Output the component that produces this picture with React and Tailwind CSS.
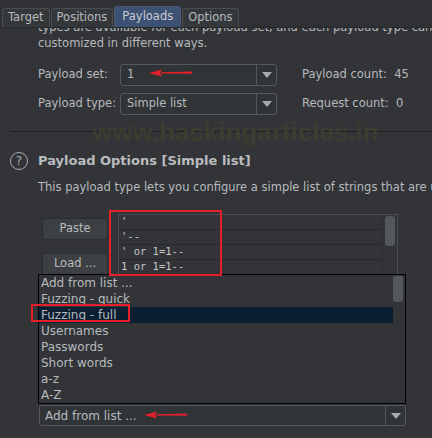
const tabs = ['Target', 'Positions', 'Payloads', 'Options']
const items = ["'", "'--", "' or 1=1--", '1 or 1=1--']
const lists = ['Add from list ...', 'Fuzzing - quick', 'Fuzzing - full', 'Usernames', 'Passwords', 'Short words', 'a-z', 'A-Z']

function Arrow() {
  return (
    <div className="h-[5px] w-0 border-x-[5px] border-t-[6px] border-x-transparent border-t-[#a9acaf]" />
  )
}

function Combo({ value, className }) {
  return (
    <div className={'flex h-[22px] items-stretch rounded-[3px] border border-[#55585c] bg-[#313437] ' + className}>
      <div className="flex flex-1 items-center px-[6px]">{value}</div>
      <div className="flex w-[20px] items-center justify-center border-l border-[#55585c]">
        <Arrow />
      </div>
    </div>
  )
}

function RedArrow({ className }) {
  return (
    <svg className={'absolute ' + className} width="44" height="8" viewBox="0 0 44 8">
      <path d="M12 3.2 L43 2.6 L43 4.8 L12 4.4 Z" fill="#e5202b" />
      <path d="M0 4 L13 0.5 L11 4 L13 7.5 Z" fill="#e5202b" />
    </svg>
  )
}

export default function App() {
  return (
    <div className="relative h-[438px] w-[432px] overflow-hidden bg-[#323437] text-[11.5px] text-[#b7babd]" style={{ fontFamily: '"DejaVu Sans", sans-serif' }}>
      {/* tabs */}
      <div className="relative z-10 flex h-[28px] items-end gap-[1px] border-b border-[#27292b] bg-[#2f3134] pl-[2px]">
        {tabs.map(t => (
          <div
            key={t}
            className={
              t === 'Payloads'
                ? 'flex h-[21px] items-start rounded-t-[3px] border border-b-0 border-[#4b5a72] bg-[#3d5174] px-[7px] pt-[1px] text-[#c9ccd0]'
                : 'flex h-[19px] items-center rounded-t-[3px] border border-b-0 border-[#4a4c50] bg-[#35383b] px-[5px]'
            }
          >
            {t}
          </div>
        ))}
      </div>

      {/* intro text, scrolled so the first line is half hidden */}
      <div className="h-[23px] overflow-hidden pl-[38px]">
        <div className="-mt-[9px] whitespace-nowrap leading-[16px]">
          <div>types are available for each payload set, and each payload type can be</div>
          <div>customized in different ways.</div>
        </div>
      </div>

      <div className="mt-[13px] flex items-center pl-[38px]">
        <div className="w-[82px]">Payload set:</div>
        <Combo value="1" className="w-[157px]" />
        <div className="ml-[25px]">Payload count:&nbsp; 45</div>
      </div>
      <div className="mt-[7px] flex items-center pl-[38px]">
        <div className="w-[82px]">Payload type:</div>
        <Combo value="Simple list" className="w-[157px]" />
        <div className="ml-[25px]">Request count:&nbsp; 0</div>
      </div>

      <div className="relative mt-[16px] ml-[10px] h-px bg-[#1f2123]" />
      <div className="absolute left-[92px] top-[113px] text-[26px] font-bold text-[#3a3d2f]" style={{ fontFamily: '"Liberation Sans", sans-serif' }}>
        www.hackingarticles.in
      </div>

      <div className="relative mt-[20px] flex h-[18px] items-center pl-[10px]">
        <div className="flex h-[18px] w-[18px] items-center justify-center rounded-full border border-[#a9acaf] text-[12px] text-[#a9acaf]">?</div>
        <div className="ml-[10px] text-[13px] font-bold text-[#b9bcbf]">Payload Options [Simple list]</div>
      </div>
      <div className="mt-[9px] whitespace-nowrap pl-[38px] leading-[16px]">
        This payload type lets you configure a simple list of strings that are used as payloads.
      </div>

      <div className="mt-[19px] flex h-[191px]">
        <div className="ml-[42px] mt-[4px] flex w-[66px] flex-col gap-[13px]">
          <div className="flex h-[22px] items-center justify-center rounded-[3px] border border-[#2b2d30] bg-[#3d4043]">Paste</div>
          <div className="flex h-[22px] items-center justify-center rounded-[3px] border border-[#2b2d30] bg-[#3d4043]">Load ...</div>
        </div>
        <div className="ml-[10px] flex h-[160px] w-[280px] border border-[#4a4d50] bg-[#323437]">
          <div className="flex-1" style={{ fontFamily: '"DejaVu Sans Mono", monospace' }}>
            {items.map(it => (
              <div key={it} className="flex h-[15px] items-center border-b border-[#27292b] pl-[2px] text-[10.5px] text-[#c6c9cb]">
                {it}
              </div>
            ))}
          </div>
          <div className="w-[15px] border-l border-[#2a2c2e] pt-[1px]">
            <div className="mx-auto h-[30px] w-[10px] rounded-[3px] bg-[#55585b]" />
          </div>
        </div>
      </div>

      <div className="ml-[39px] flex h-[21px] w-[367px] items-stretch rounded-[3px] border border-[#55585c] bg-[#313437]">
        <div className="flex flex-1 items-center px-[5px] text-[12px]">Add from list ...</div>
        <div className="flex w-[20px] items-center justify-center border-l border-[#55585c]">
          <Arrow />
        </div>
      </div>

      {/* open dropdown popup */}
      <div className="absolute left-[38px] top-[274px] flex h-[130px] w-[368px] border border-black bg-[#323437] text-[12px]">
        <div className="flex-1">
          {lists.map(l => (
            <div key={l} className={'flex h-[16px] items-center pl-[2px] ' + (l === 'Fuzzing - full' ? 'bg-[#0b1f33]' : '')}>
              {l}
            </div>
          ))}
        </div>
        <div className="w-[12px] pt-[1px]">
          <div className="h-[26px] w-[10px] rounded-[3px] bg-[#55585b]" />
        </div>
      </div>

      {/* annotations */}
      <div className="absolute left-[109px] top-[210px] h-[66px] w-[113px] border-2 border-[#e5202b]" />
      <div className="absolute left-[31px] top-[304px] h-[18px] w-[99px] border-2 border-[#e5202b]" />
      <RedArrow className="left-[149px] top-[69px]" />
      <RedArrow className="left-[144px] top-[411px]" />
    </div>
  )
}
